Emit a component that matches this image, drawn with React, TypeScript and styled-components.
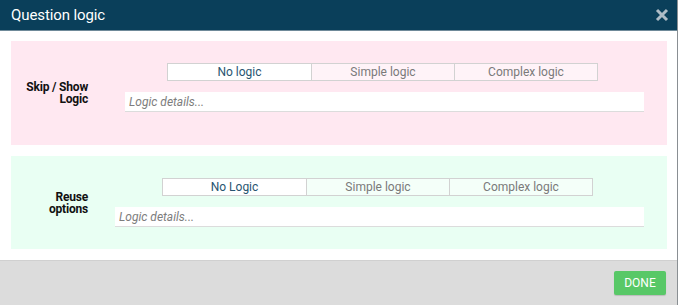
import React from "react";
import styled, { createGlobalStyle } from "styled-components";

const GlobalStyle = createGlobalStyle`
  html, body {
    margin: 0;
    padding: 0;
    background: #ffffff;
  }
  body {
    font-family: Roboto, "Liberation Sans", sans-serif;
  }
`;

type Tint = "pink" | "green";

const tints: Record<Tint, { panel: string; button: string }> = {
  pink: { panel: "#ffe8f1", button: "#fff3f8" },
  green: { panel: "#e9fff3", button: "#f4fff9" },
};

const Dialog = styled.div`
  width: 678px;
  height: 305px;
  display: flex;
  flex-direction: column;
  box-sizing: border-box;
  border-right: 1px solid #8a8f93;
  border-bottom: 1px solid #8a8f93;
  background: #ffffff;
`;

const Header = styled.header`
  height: 30px;
  flex: 0 0 auto;
  display: flex;
  align-items: center;
  justify-content: space-between;
  padding: 0 8px 0 11px;
  background: #0a3f5a;
  border-bottom: 1px solid #6f8a99;
`;

const Title = styled.h1`
  margin: 0;
  font-size: 15px;
  font-weight: 400;
  color: #ffffff;
  letter-spacing: -0.1px;
`;

const CloseButton = styled.button`
  border: 0;
  padding: 0;
  background: none;
  width: 14px;
  height: 14px;
  display: flex;
  cursor: pointer;
`;

const Body = styled.main`
  flex: 1 1 auto;
  display: flex;
  flex-direction: column;
  gap: 11px;
  padding: 10px 10px 11px 11px;
`;

const Panel = styled.section<{ $tint: Tint; $height: number }>`
  height: ${(p) => p.$height}px;
  box-sizing: border-box;
  display: grid;
  grid-template-columns: 77px 1fr;
  align-items: center;
  padding-right: 23px;
  background: ${(p) => tints[p.$tint].panel};
`;

const Label = styled.div`
  text-align: right;
  font-size: 12px;
  font-weight: 700;
  line-height: 12px;
  color: #111111;
  letter-spacing: -0.2px;
`;

const Content = styled.div<{ $gap: number }>`
  align-self: start;
  display: flex;
  flex-direction: column;
  align-items: center;
  gap: 11px;
  padding: 22px 0 0 ${(p) => p.$gap}px;
`;

const Segments = styled.div`
  display: flex;
  margin-right: 4px;
`;

const Segment = styled.button<{ $tint: Tint; $active?: boolean }>`
  width: 144px;
  height: 18px;
  padding: 0;
  margin-left: -1px;
  box-sizing: border-box;
  border: 1px solid #d2d2d2;
  background: ${(p) => (p.$active ? "#ffffff" : tints[p.$tint].button)};
  color: ${(p) => (p.$active ? "#285470" : "#7a7a7a")};
  font-family: Roboto, "Liberation Sans", sans-serif;
  font-size: 12px;
  line-height: 16px;
  cursor: pointer;
  &:first-child {
    margin-left: 0;
    width: 145px;
  }
`;

const DetailsInput = styled.input`
  width: 100%;
  height: 20px;
  box-sizing: border-box;
  border: 0;
  border-bottom: 1px solid #dcdcdc;
  background: #ffffff;
  padding: 0 4px;
  font-family: Roboto, "Liberation Sans", sans-serif;
  font-size: 12px;
  color: #333333;
  outline: none;
  &::placeholder {
    color: #7d7d7d;
    font-style: italic;
  }
`;

const Footer = styled.footer`
  height: 44px;
  flex: 0 0 auto;
  display: flex;
  align-items: center;
  justify-content: flex-end;
  padding-right: 11px;
  background: #dcdcdc;
  border-top: 1px solid #d0d0d0;
`;

const DoneButton = styled.button`
  width: 52px;
  height: 24px;
  border: 0;
  border-radius: 2px;
  background: #58c867;
  color: #ffffff;
  font-family: Roboto, "Liberation Sans", sans-serif;
  font-size: 12px;
  cursor: pointer;
  box-shadow: 0 1px 1px rgba(0, 0, 0, 0.15);
`;

interface LogicPanelProps {
  tint: Tint;
  label: React.ReactNode;
  height: number;
  gap: number;
  options: string[];
}

function LogicPanel(props: LogicPanelProps) {
  return (
    <Panel $tint={props.tint} $height={props.height}>
      <Label>{props.label}</Label>
      <Content $gap={props.gap}>
        <Segments>
          {props.options.map((o, i) => (
            <Segment key={o} $tint={props.tint} $active={i === 0}>
              {o}
            </Segment>
          ))}
        </Segments>
        <DetailsInput placeholder="Logic details..." />
      </Content>
    </Panel>
  );
}

export default function App() {
  return (
    <>
      <GlobalStyle />
      <Dialog>
        <Header>
          <Title>Question logic</Title>
          <CloseButton aria-label="Close">
            <svg width="14" height="14" viewBox="0 0 14 14">
              <path d="M2 2 L12 12 M12 2 L2 12" stroke="#aebcc6" strokeWidth="3" strokeLinecap="butt" />
            </svg>
          </CloseButton>
        </Header>
        <Body>
          <LogicPanel
            tint="pink"
            height={104}
            gap={37}
            label={
              <>
                Skip / Show
                <br />
                Logic
              </>
            }
            options={["No logic", "Simple logic", "Complex logic"]}
          />
          <LogicPanel
            tint="green"
            height={93}
            gap={27}
            label={
              <>
                Reuse
                <br />
                options
              </>
            }
            options={["No Logic", "Simple logic", "Complex logic"]}
          />
        </Body>
        <Footer>
          <DoneButton>DONE</DoneButton>
        </Footer>
      </Dialog>
    </>
  );
}
